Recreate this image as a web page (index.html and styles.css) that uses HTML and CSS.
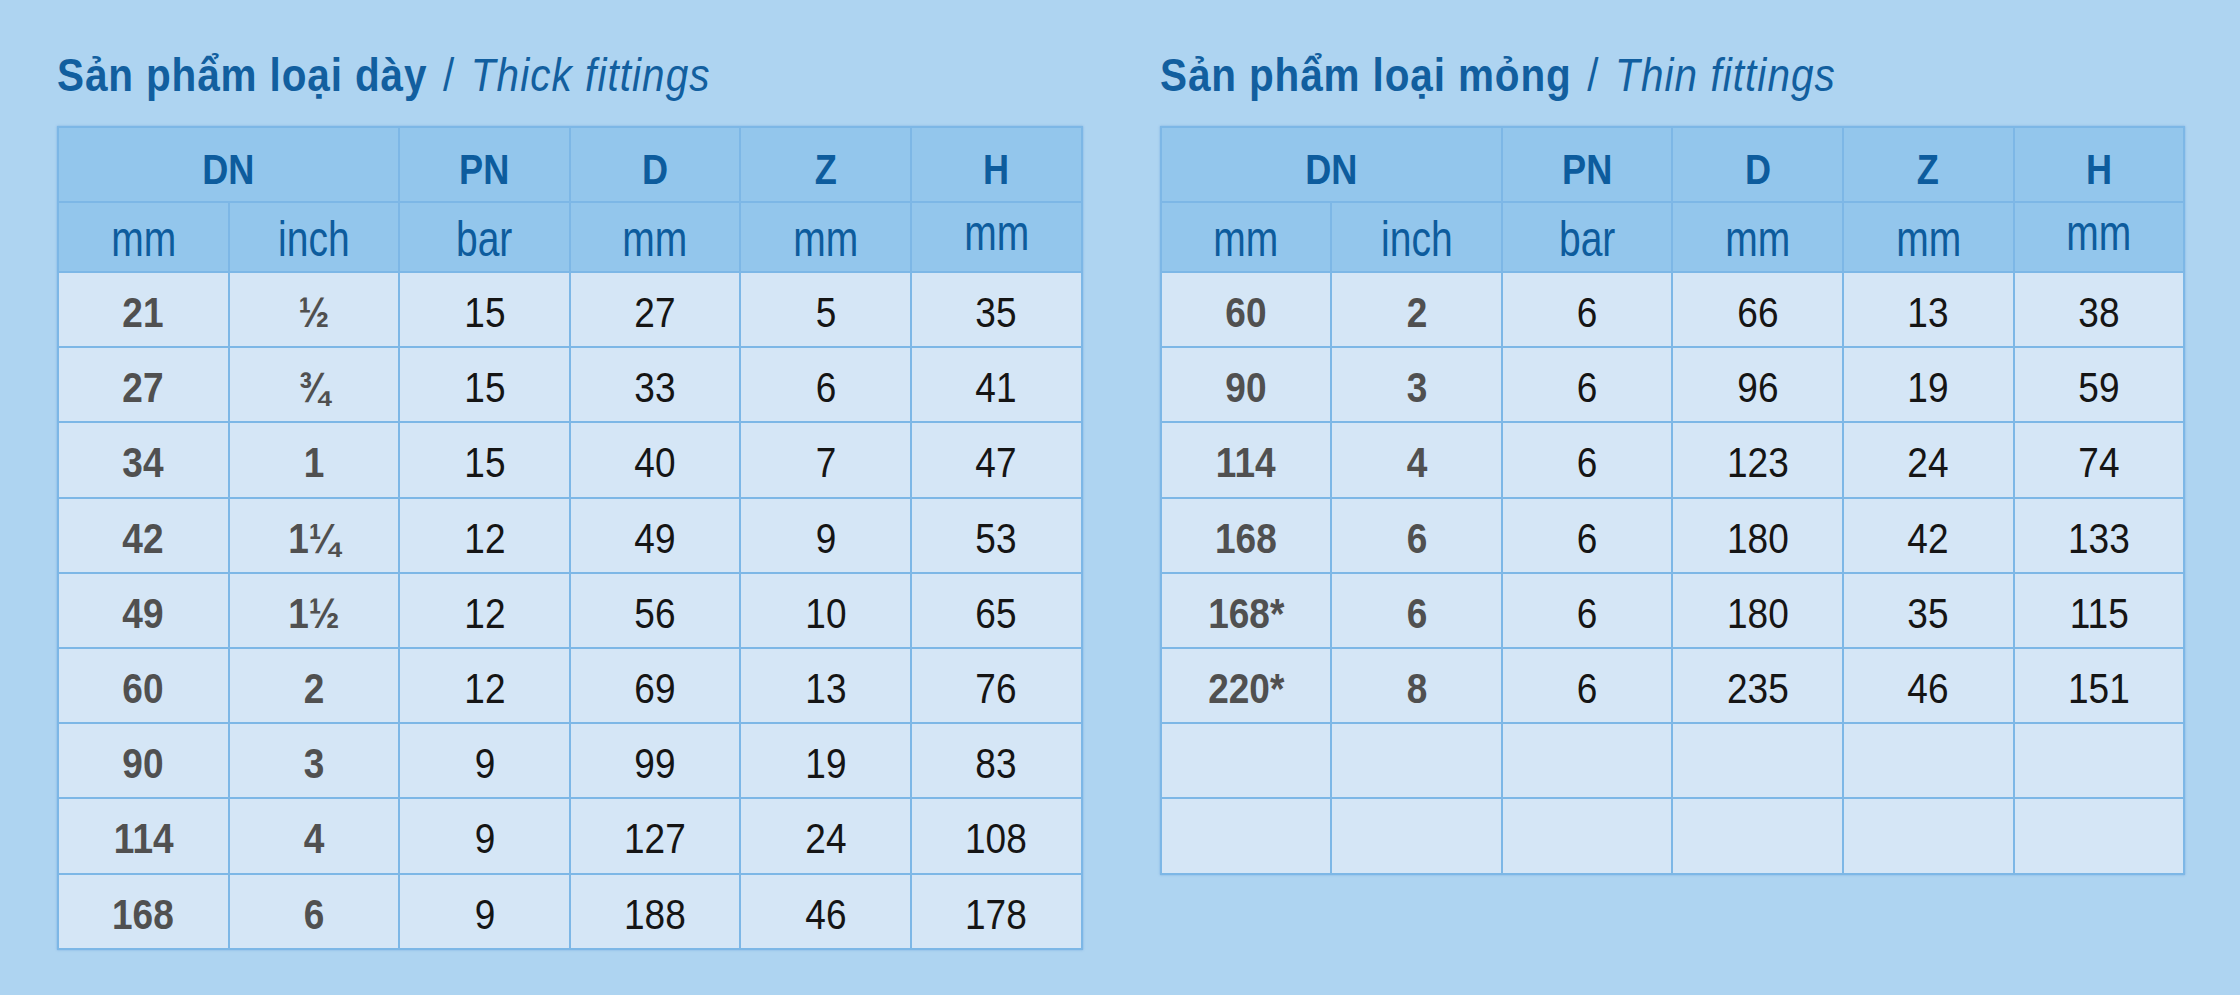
FILE: index.html
```html
<!DOCTYPE html>
<html lang="vi">
<head>
<meta charset="utf-8">
<title>Fittings</title>
<link rel="stylesheet" href="styles.css">
</head>
<body>
<main class="page">
  <section class="block">
    <h2 class="title">Sản phẩm loại dày <span class="slash">/</span> <em>Thick fittings</em></h2>
    <table class="spec">
      <colgroup><col><col><col><col><col><col></colgroup>
      <thead>
        <tr class="head"><th colspan="2"><span>DN</span></th><th><span>PN</span></th><th><span>D</span></th><th><span>Z</span></th><th><span>H</span></th></tr>
        <tr class="unit"><th><span>mm</span></th><th><span>inch</span></th><th><span>bar</span></th><th><span>mm</span></th><th><span>mm</span></th><th class="hi"><span>mm</span></th></tr>
      </thead>
      <tbody>
        <tr><td class="k"><span>21</span></td><td class="k"><span>½</span></td><td><span>15</span></td><td><span>27</span></td><td><span>5</span></td><td><span>35</span></td></tr>
        <tr><td class="k"><span>27</span></td><td class="k"><span>¾</span></td><td><span>15</span></td><td><span>33</span></td><td><span>6</span></td><td><span>41</span></td></tr>
        <tr><td class="k"><span>34</span></td><td class="k"><span>1</span></td><td><span>15</span></td><td><span>40</span></td><td><span>7</span></td><td><span>47</span></td></tr>
        <tr><td class="k"><span>42</span></td><td class="k"><span>1¼</span></td><td><span>12</span></td><td><span>49</span></td><td><span>9</span></td><td><span>53</span></td></tr>
        <tr><td class="k"><span>49</span></td><td class="k"><span>1½</span></td><td><span>12</span></td><td><span>56</span></td><td><span>10</span></td><td><span>65</span></td></tr>
        <tr><td class="k"><span>60</span></td><td class="k"><span>2</span></td><td><span>12</span></td><td><span>69</span></td><td><span>13</span></td><td><span>76</span></td></tr>
        <tr><td class="k"><span>90</span></td><td class="k"><span>3</span></td><td><span>9</span></td><td><span>99</span></td><td><span>19</span></td><td><span>83</span></td></tr>
        <tr><td class="k"><span>114</span></td><td class="k"><span>4</span></td><td><span>9</span></td><td><span>127</span></td><td><span>24</span></td><td><span>108</span></td></tr>
        <tr><td class="k"><span>168</span></td><td class="k"><span>6</span></td><td><span>9</span></td><td><span>188</span></td><td><span>46</span></td><td><span>178</span></td></tr>
      </tbody>
    </table>
  </section>
  <section class="block">
    <h2 class="title">Sản phẩm loại mỏng <span class="slash">/</span> <em>Thin fittings</em></h2>
    <table class="spec">
      <colgroup><col><col><col><col><col><col></colgroup>
      <thead>
        <tr class="head"><th colspan="2"><span>DN</span></th><th><span>PN</span></th><th><span>D</span></th><th><span>Z</span></th><th><span>H</span></th></tr>
        <tr class="unit"><th><span>mm</span></th><th><span>inch</span></th><th><span>bar</span></th><th><span>mm</span></th><th><span>mm</span></th><th class="hi"><span>mm</span></th></tr>
      </thead>
      <tbody>
        <tr><td class="k"><span>60</span></td><td class="k"><span>2</span></td><td><span>6</span></td><td><span>66</span></td><td><span>13</span></td><td><span>38</span></td></tr>
        <tr><td class="k"><span>90</span></td><td class="k"><span>3</span></td><td><span>6</span></td><td><span>96</span></td><td><span>19</span></td><td><span>59</span></td></tr>
        <tr><td class="k"><span>114</span></td><td class="k"><span>4</span></td><td><span>6</span></td><td><span>123</span></td><td><span>24</span></td><td><span>74</span></td></tr>
        <tr><td class="k"><span>168</span></td><td class="k"><span>6</span></td><td><span>6</span></td><td><span>180</span></td><td><span>42</span></td><td><span>133</span></td></tr>
        <tr><td class="k"><span>168*</span></td><td class="k"><span>6</span></td><td><span>6</span></td><td><span>180</span></td><td><span>35</span></td><td><span>115</span></td></tr>
        <tr><td class="k"><span>220*</span></td><td class="k"><span>8</span></td><td><span>6</span></td><td><span>235</span></td><td><span>46</span></td><td><span>151</span></td></tr>
        <tr><td></td><td></td><td></td><td></td><td></td><td></td></tr>
        <tr><td></td><td></td><td></td><td></td><td></td><td></td></tr>
      </tbody>
    </table>
  </section>
</main>
</body>
</html>
```

FILE: styles.css
```css
html, body {
  margin: 0;
  padding: 0;
}
body {
  background: #aed4f1;
  width: 2240px;
  height: 995px;
  overflow: hidden;
  font-family: "Liberation Sans", Arial, sans-serif;
}
.page {
  display: flex;
  gap: 77px;
  padding: 45px 0 0 57px;
  align-items: flex-start;
}
.block {
  display: flex;
  flex-direction: column;
  gap: 21px;
}
.title {
  margin: 0;
  font-size: 46px;
  line-height: 60px;
  font-weight: bold;
  color: #125f9f;
  letter-spacing: 1px;
  white-space: nowrap;
  transform: scaleX(0.88);
  transform-origin: left center;
}
.title em {
  font-weight: normal;
  font-style: italic;
  letter-spacing: 1.2px;
}
.title .slash {
  font-weight: normal;
  margin: 0 4px 0 4px;
}
.spec {
  border-collapse: collapse;
  table-layout: fixed;
  width: 1024px;
  background: #d5e6f6;
  box-shadow: 0 0 2px rgba(80, 140, 210, 0.5);
}
.spec col {
  width: 170.6px;
}
.spec th, .spec td {
  border: 2px solid #7db7e6;
  text-align: center;
  padding: 0;
}
.spec span {
  display: inline-block;
  transform: scaleX(0.86);
}
.spec thead th {
  background: #93c6ec;
  color: #0d5c9d;
}
.head th {
  height: 75px;
  font-size: 42px;
  font-weight: bold;
  padding-top: 10px;
  box-sizing: border-box;
}
.unit th {
  height: 70px;
  font-size: 50px;
  line-height: 50px;
  font-weight: normal;
  padding-top: 4px;
  box-sizing: border-box;
}
.unit th span {
  transform: scaleX(0.78);
}
.unit th.hi {
  padding-top: 0;
  padding-bottom: 8px;
}
.spec tbody tr {
  height: 75.2px;
}
.spec td {
  font-size: 43px;
  color: #151515;
  padding-top: 6px;
  box-sizing: border-box;
}
.spec td.k {
  color: #505050;
  font-weight: bold;
}
```
